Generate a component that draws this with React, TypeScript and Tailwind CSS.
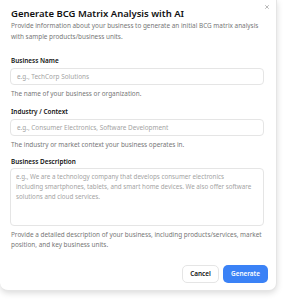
import { X } from 'lucide-react';

export default function App() {
  return (
    <div className="w-[284px] h-[300px] bg-white overflow-hidden" style={{ fontFamily: '"Noto Sans", "Open Sans", sans-serif' }}>
      <div className="relative w-[277px] h-[291px] bg-white rounded-b-lg border-r border-b border-neutral-200 shadow-[0_2px_6px_rgba(0,0,0,0.15)] pl-[11px] pr-[10px] pt-[7px]">
        <button className="absolute right-[6px] top-[4px] text-neutral-500">
          <X size={6} strokeWidth={2} />
        </button>

        <h2 className="text-[9.5px] leading-[13px] font-semibold text-[#111111]">Generate BCG Matrix Analysis with AI</h2>
        <p className="text-[6.4px] leading-[11px] text-[#777777]">
          Provide information about your business to generate an initial BCG matrix analysis with sample products/business units.
        </p>

        <Field
          label="Business Name"
          placeholder="e.g., TechCorp Solutions"
          help="The name of your business or organization."
          first
        />
        <Field
          label="Industry / Context"
          placeholder="e.g., Consumer Electronics, Software Development"
          help="The industry or market context your business operates in."
        />

        <label className="block mt-[8px] text-[6.4px] leading-[9px] font-semibold text-[#111111]">Business Description</label>
        <div className="mt-[2.5px] -ml-[1px] w-[254px] h-[58px] rounded-[4px] border border-neutral-200 pl-[5px] pt-[3px] text-[6.25px] leading-[10px] text-[#a3a3a3] whitespace-nowrap overflow-hidden">
          e.g., We are a technology company that develops consumer electronics
          <br />
          including smartphones, tablets, and smart home devices. We also offer software
          <br />
          solutions and cloud services.
        </div>
        <p className="mt-[4px] text-[6.4px] leading-[10px] text-[#777777]">
          Provide a detailed description of your business, including products/services, market position, and key business units.
        </p>

        <div className="mt-[15px] -mr-[2px] flex justify-end gap-[4px]">
          <button className="w-[37px] h-[18px] rounded-[5px] border border-neutral-200 bg-white text-[6.4px] font-semibold text-[#111111]">
            Cancel
          </button>
          <button className="w-[45px] h-[18px] rounded-[5px] bg-[#3b82f6] text-[6.4px] font-semibold text-white">
            Generate
          </button>
        </div>
      </div>
    </div>
  );
}

function Field({ label, placeholder, help, first }: { label: string; placeholder: string; help: string; first?: boolean }) {
  return (
    <div className={first ? 'mt-[13.5px]' : 'mt-[9px]'}>
      <label className="block text-[6.4px] leading-[9px] font-semibold text-[#111111]">{label}</label>
      <div className="mt-[3.5px] -ml-[1px] w-[254px] h-[17px] rounded-[4px] border border-neutral-200 px-[6px] flex items-center text-[6.4px] text-[#a3a3a3]">
        {placeholder}
      </div>
      <p className="mt-[3.5px] text-[6.4px] leading-[9px] text-[#777777]">{help}</p>
    </div>
  );
}
